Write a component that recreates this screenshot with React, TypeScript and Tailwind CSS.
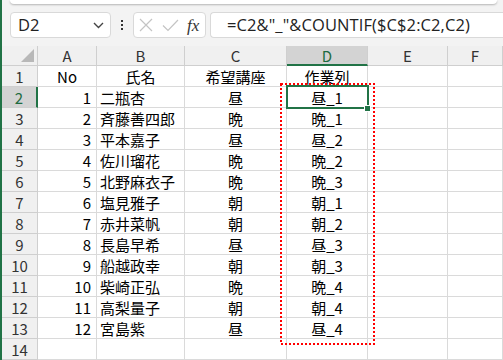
import React from "react";

const rows: [string, string, string, string][] = [
  ["1", "二瓶杏", "昼", "昼_1"],
  ["2", "斉藤善四郎", "晩", "晩_1"],
  ["3", "平本嘉子", "昼", "昼_2"],
  ["4", "佐川瑠花", "晩", "晩_2"],
  ["5", "北野麻衣子", "晩", "晩_3"],
  ["6", "塩見雅子", "朝", "朝_1"],
  ["7", "赤井菜帆", "朝", "朝_2"],
  ["8", "長島早希", "昼", "昼_3"],
  ["9", "船越政幸", "朝", "朝_3"],
  ["10", "柴崎正弘", "晩", "晩_4"],
  ["11", "高梨量子", "朝", "朝_4"],
  ["12", "宮島紫", "昼", "昼_4"],
];

const cell = "h-[21px] border-r border-b border-[#dadada] bg-white flex items-center overflow-hidden whitespace-nowrap";
const rowHead = "h-[21px] border-r border-b border-[#cfcfcf] bg-[#f0f0f0] flex items-center justify-center text-[#333]";

export default function App() {
  return (
    <div
      className="w-[503px] h-[360px] overflow-hidden bg-[#f3f3f3] border-l-2 border-[#217346] flex flex-col"
      style={{ fontFamily: '"Noto Sans CJK JP", "Noto Sans", sans-serif' }}
    >
      <div className="ml-[8px] mr-[6px] h-[4px] bg-white rounded-b-[6px] shadow-[0_1px_2px_rgba(0,0,0,0.25)]" />
      <div className="mt-[8px] h-[26px] flex pl-[8px]">
        <div className="w-[101px] bg-white border border-[#d9d9d9] rounded-[4px] flex items-center pl-[7px] pr-[5px]">
          <span className="text-[16.5px] text-[#222] flex-1 leading-none" style={{ fontFamily: '"Open Sans", "Noto Sans", sans-serif' }}>D2</span>
          <svg width="11" height="7" viewBox="0 0 11 7" className="mr-[1px]">
            <path d="M1 1 L5.5 5.5 L10 1" fill="none" stroke="#444" strokeWidth="1.4" />
          </svg>
        </div>
        <div className="w-[22px] flex flex-col items-center justify-center gap-[2px]">
          <div className="w-[2px] h-[2px] bg-[#333]" />
          <div className="w-[2px] h-[2px] bg-[#333]" />
          <div className="w-[2px] h-[2px] bg-[#333]" />
        </div>
        <div className="w-[73px] bg-white border border-[#d9d9d9] rounded-[4px] flex items-center pl-[4px]">
          <svg width="14" height="14" viewBox="0 0 14 14" className="ml-[1px]">
            <path d="M1 1 L13 13 M13 1 L1 13" stroke="#c4c4c4" strokeWidth="1.2" fill="none" />
          </svg>
          <svg width="17" height="13" viewBox="0 0 17 13" className="ml-[9px]">
            <path d="M1 6.5 L6 11.5 L16 1" stroke="#c4c4c4" strokeWidth="1.2" fill="none" />
          </svg>
          <span
            className="ml-[8px] text-[17px] italic text-[#333] leading-none"
            style={{ fontFamily: '"Liberation Serif", serif' }}
          >
            fx
          </span>
        </div>
        <div className="ml-[4px] flex-1 bg-white border border-r-0 border-[#d9d9d9] rounded-l-[4px] flex items-center pl-[16px]">
          <span className="text-[16.5px] text-[#222] whitespace-nowrap tracking-[0.1px]" style={{ fontFamily: '"Open Sans", "Noto Sans", sans-serif' }}>
            =C2&amp;"_"&amp;COUNTIF($C$2:C2,C2)
          </span>
        </div>
      </div>
      <div className="mt-[8px] relative text-[15px] leading-none">
        <div className="grid grid-cols-[36px_59px_88px_102px_81px_80px_1fr]">
          <div className="h-[20px] border-r border-b border-[#cfcfcf] bg-[#f0f0f0] relative">
            <svg width="13" height="13" viewBox="0 0 13 13" className="absolute right-[3px] bottom-[3px]">
              <path d="M13 0 L13 13 L0 13 Z" fill="#b8b8b8" />
            </svg>
          </div>
          {["A", "B", "C"].map((l) => (
            <div key={l} className="h-[20px] border-r border-b border-[#cfcfcf] bg-[#f0f0f0] flex items-center justify-center text-[#333]">
              {l}
            </div>
          ))}
          <div className="h-[20px] border-r border-[#cfcfcf] border-b-2 border-b-[#217346] bg-[#d3d3d3] flex items-center justify-center text-[#1e6b41]">
            D
          </div>
          {["E", "F"].map((l) => (
            <div key={l} className="h-[20px] border-r border-b border-[#cfcfcf] bg-[#f0f0f0] flex items-center justify-center text-[#333]">
              {l}
            </div>
          ))}

          <div className={rowHead}>1</div>
          <div className={`${cell} justify-center`}>No</div>
          <div className={`${cell} justify-center`}>氏名</div>
          <div className={`${cell} justify-center`}>希望講座</div>
          <div className={`${cell} justify-center`}>作業列</div>
          <div className={cell} />
          <div className={cell} />

          {rows.map((r, i) => (
            <React.Fragment key={r[0]}>
              {i === 0 ? (
                <div className="h-[21px] border-r-2 border-r-[#217346] border-b border-b-[#cfcfcf] bg-[#d3d3d3] flex items-center justify-center text-[#1e6b41]">
                  {i + 2}
                </div>
              ) : (
                <div className={rowHead}>{i + 2}</div>
              )}
              <div className={`${cell} justify-end pr-[5px]`}>{r[0]}</div>
              <div className={`${cell} pl-[3px]`}>{r[1]}</div>
              <div className={`${cell} justify-center`}>{r[2]}</div>
              <div className={`${cell} justify-center`}>{r[3]}</div>
              <div className={cell} />
              <div className={cell} />
            </React.Fragment>
          ))}

          <div className={rowHead}>14</div>
          <div className={cell} />
          <div className={cell} />
          <div className={cell} />
          <div className={cell} />
          <div className={cell} />
          <div className={cell} />
        </div>

        <svg className="absolute left-[278px] top-[37px] pointer-events-none" width="95" height="262" viewBox="0 0 95 262">
          <rect x="1" y="1" width="93" height="260" fill="none" stroke="#ff0000" strokeWidth="2" strokeDasharray="2 2" />
        </svg>
        <div className="absolute left-[284px] top-[39px] w-[83px] h-[24px] border-2 border-[#217346] pointer-events-none" />
        <div className="absolute left-[362px] top-[59px] w-[7px] h-[7px] bg-[#217346] border border-white pointer-events-none" />
      </div>
    </div>
  );
}
